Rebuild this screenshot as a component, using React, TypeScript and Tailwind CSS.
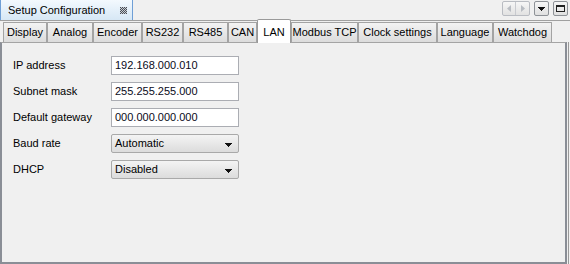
import React from "react";

const tabs = [
  { label: "Display", w: 44 },
  { label: "Analog", w: 46 },
  { label: "Encoder", w: 49 },
  { label: "RS232", w: 41 },
  { label: "RS485", w: 45 },
  { label: "CAN", w: 29 },
  { label: "LAN", w: 34, active: true },
  { label: "Modbus TCP", w: 67 },
  { label: "Clock settings", w: 79 },
  { label: "Language", w: 56 },
  { label: "Watchdog", w: 59 },
];

function CloseIcon() {
  const cells: [number, number][] = [];
  for (let y = 0; y < 7; y++)
    for (let x = 0; x < 7; x++) if ((x + y) % 2 === 0) cells.push([x, y]);
  return (
    <svg width="7" height="7" viewBox="0 0 7 7" shapeRendering="crispEdges">
      <rect x="0" y="0" width="7" height="7" fill="#c8cdd4" />
      {cells.map(([x, y]) => (
        <rect key={`${x}-${y}`} x={x} y={y} width="1" height="1" fill="#4a4f57" />
      ))}
    </svg>
  );
}

function Arrow() {
  return (
    <svg width="7" height="4" viewBox="0 0 7 4" shapeRendering="crispEdges">
      <path d="M0 0H7L3.5 4Z" fill="#111" />
    </svg>
  );
}

function TextField({ value }: { value: string }) {
  return (
    <div className="w-[128px] h-[19px] border border-[#abadb3] bg-white flex items-center pl-[3px] text-[11px] text-[#0a0a1a]">
      {value}
    </div>
  );
}

function Combo({ value }: { value: string }) {
  return (
    <div className="w-[128px] h-[19px] border border-[#a9a9a9] rounded-[2px] bg-gradient-to-b from-[#f4f4f4] to-[#dcdcdc] flex items-center justify-between pl-[3px] pr-[6px] text-[11px] text-black">
      <span>{value}</span>
      <span className="mt-[2px]">
        <Arrow />
      </span>
    </div>
  );
}

export default function App() {
  const rows: { label: string; node: React.ReactNode }[] = [
    { label: "IP address", node: <TextField value="192.168.000.010" /> },
    { label: "Subnet mask", node: <TextField value="255.255.255.000" /> },
    { label: "Default gateway", node: <TextField value="000.000.000.000" /> },
    { label: "Baud rate", node: <Combo value="Automatic" /> },
    { label: "DHCP", node: <Combo value="Disabled" /> },
  ];
  return (
    <div
      className="w-[570px] h-[264px] bg-[#f0f0f0] flex flex-col overflow-hidden text-black"
      style={{ fontFamily: '"Liberation Sans", Arial, sans-serif' }}
    >
      {/* header */}
      <div className="h-[21px] flex items-start border-b border-[#a0a0a0] shrink-0">
        <div className="w-[133px] h-[20px] bg-gradient-to-b from-[#f3f9fe] to-[#d6e7f5] border-r border-l border-[#6f9fd6] flex items-center justify-between pl-[7px] pr-[5px] text-[11px]">
          <span>Setup Configuration</span>
          <CloseIcon />
        </div>
        <div className="flex-1" />
        <div className="flex items-center mt-[1px] gap-[4px] mr-[2px]">
          <div className="flex h-[15px] border border-[#b9bcc2] rounded-[2px] bg-gradient-to-b from-[#f6f6f6] to-[#e2e2e2]">
            <div className="w-[13px] flex items-center justify-center border-r border-[#c8cacf]">
              <svg width="4" height="7" viewBox="0 0 4 7"><path d="M4 0V7L0 3.5Z" fill="#b8bcc2" /></svg>
            </div>
            <div className="w-[13px] flex items-center justify-center">
              <svg width="4" height="7" viewBox="0 0 4 7"><path d="M0 0V7L4 3.5Z" fill="#b8bcc2" /></svg>
            </div>
          </div>
          <div className="w-[15px] h-[15px] border border-[#8e9297] rounded-[2px] bg-gradient-to-b from-[#f6f6f6] to-[#e0e0e0] flex items-center justify-center">
            <Arrow />
          </div>
          <div className="w-[15px] h-[15px] border border-[#8e9297] rounded-[2px] bg-gradient-to-b from-[#f6f6f6] to-[#e0e0e0] flex items-center justify-center">
            <div className="w-[9px] h-[7px] border border-[#222] border-t-2" />
          </div>
        </div>
      </div>
      {/* tab strip */}
      <div className="h-[21px] flex items-end pl-[3px] shrink-0 relative z-10">
        {tabs.map((t) =>
          t.active ? (
            <div
              key={t.label}
              style={{ width: t.w }}
              className="h-[24px] -mb-px bg-white border border-b-0 border-[#9a9a9a] rounded-t-[2px] flex justify-center pt-[4px] text-[11px]"
            >
              {t.label}
            </div>
          ) : (
            <div
              key={t.label}
              style={{ width: t.w }}
              className="h-[20px] bg-gradient-to-b from-[#f3f3f3] to-[#dcdcdc] border border-b-0 border-[#a3a3a3] rounded-t-[1px] flex items-center justify-center text-[11px]"
            >
              {t.label}
            </div>
          )
        )}
      </div>
      {/* panel */}
      <div className="flex flex-1 min-h-0">
        <div className="w-[567px] h-full border-t border-t-[#a4a4a4] border-l-2 border-r-2 border-b-2 border-l-[#8a8e96] border-r-[#8a8e96] border-b-[#8a8e96] pl-[11px] pt-[13px] flex flex-col gap-[7px]">
          {rows.map((r) => (
            <div key={r.label} className="flex items-center h-[19px]">
              <div className="w-[98px] text-[11px]">{r.label}</div>
              {r.node}
            </div>
          ))}
        </div>
        <div className="w-px" />
        <div className="w-px bg-[#9a9a9a]" />
      </div>
    </div>
  );
}
